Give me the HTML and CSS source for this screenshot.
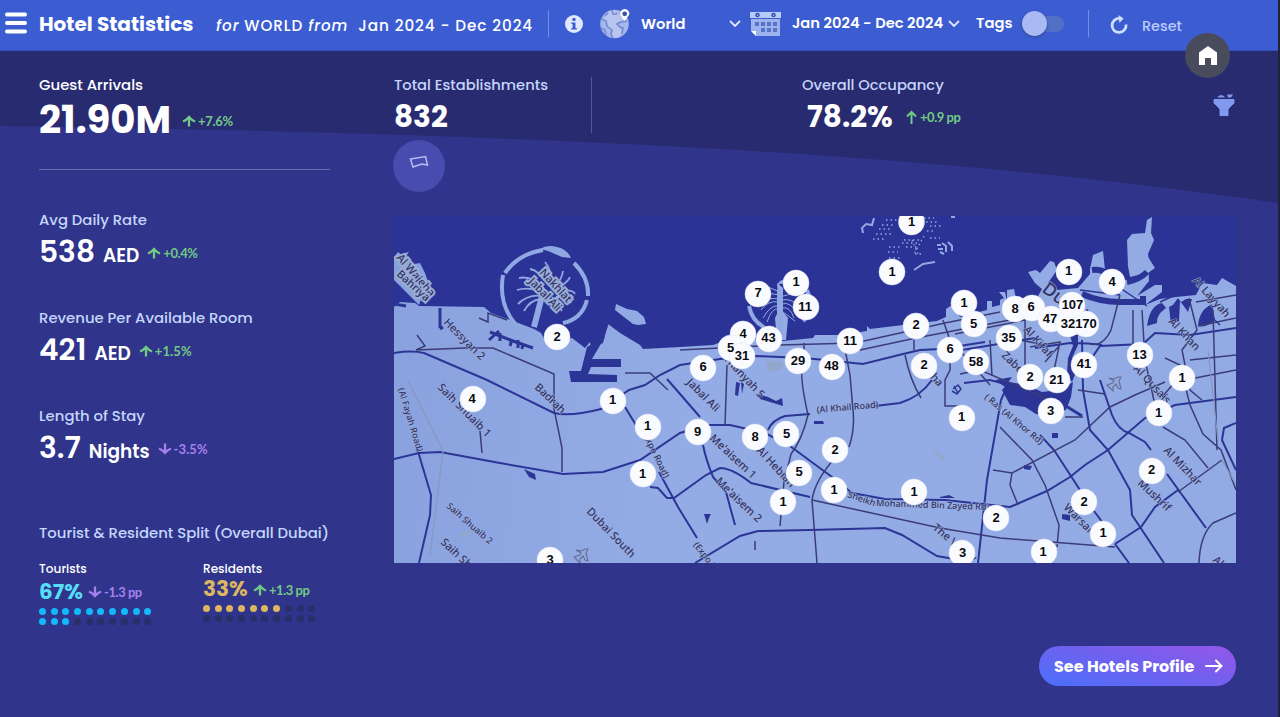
FILE: index.html
```html
<!DOCTYPE html>
<html lang="en">
<head>
<meta charset="utf-8">
<title>Hotel Statistics</title>
<link rel="stylesheet" href="styles.css">
</head>
<body>
<svg class="defs" width="0" height="0" aria-hidden="true">
  <defs>
    <symbol id="arrow" viewBox="0 0 14 12"><path d="M7 11.500V3M1 6.500Q4.500 5 7 2Q9.500 5 13 6.500" fill="none" stroke="currentColor" stroke-width="2.300"/></symbol>
    <symbol id="chevron" viewBox="0 0 12 8"><path d="M1.500 1.500L6 6L10.500 1.500" fill="none" stroke="currentColor" stroke-width="1.800" stroke-linecap="round"/></symbol>
  </defs>
</svg>
<div class="page">
  <header class="bar">
    <svg class="menu" width="22" height="23" viewBox="0 0 22 23"><path d="M2 2.500H20M2 11H20M2 19.500H20" stroke="#fff" stroke-width="4" stroke-linecap="round"/></svg>
    <h1 class="title">Hotel Statistics</h1>
    <div class="context"><i>for</i> <span>WORLD</span> <i>from</i> <span class="range">Jan 2024 - Dec 2024</span></div>
    <span class="rule"></span>
    <svg class="info" width="18" height="18" viewBox="0 0 18 18"><circle cx="9" cy="9" r="9" fill="#dfe8ff"/><circle cx="9" cy="4.500" r="1.700" fill="#3c5dd1"/><path d="M6.300 7.500H10.500V13H11.800V14.500H6.300V13H7.600V9H6.300Z" fill="#3c5dd1"/></svg>
    <svg class="globe" width="30" height="30" viewBox="0 0 30 30"><circle cx="14.500" cy="15" r="14.300" fill="#a6b7ec"/><path d="M9 3L14 1L17 5L22 6L24 12L19 12L15 15L19 18L22 23L19 28L14 29L11 25L13 22L9 20L7 14L3 10Z" fill="#b9c5ee"/><path d="M1.500 10L6 12L7 17L12 21L11 25L13 29M12 1L13 5H17M27 12L21 13L17 15L20 18L23 19L22 25M1 19L5 21L6 26M8 4L5 7" fill="none" stroke="#7389cf" stroke-width="1.500"/><path d="M24.500 12L20.500 6A4.500 4.500 0 1 1 29 6Z" fill="#fff"/><circle cx="24.700" cy="4.800" r="2.400" fill="#3551a8"/></svg>
    <span class="place">World</span>
    <svg class="chev world" width="12" height="8"><use href="#chevron"/></svg>
    <svg class="calendar" width="31" height="26" viewBox="0 0 31 26"><path d="M0 1H31V7H0Z" fill="#b7cafa"/><path d="M1 8H30V25H6L1 20Z" fill="#9db3ef"/><path d="M1 20L6 25V20Z" fill="#fff"/><g fill="#5772c6"><path d="M5 11h4v4H5zM11 11h4v4h-4zM17 11h4v4h-4zM23 11h4v4h-4zM11 17h4v4h-4zM17 17h4v4h-4zM23 17h4v4h-4z"/></g><g fill="none" stroke="#3551b0" stroke-width="1.500"><circle cx="7.500" cy="4" r="1.500"/><circle cx="23.500" cy="4" r="1.500"/></g></svg>
    <span class="period">Jan 2024 - Dec 2024</span>
    <svg class="chev" width="12" height="8"><use href="#chevron"/></svg>
    <span class="tags">Tags</span>
    <span class="toggle"><span class="knob"></span></span>
    <span class="rule second"></span>
    <svg class="reset-icon" width="18" height="19" viewBox="0 0 18 19"><path d="M10 3.500A7 7 0 1 0 16 9.500" fill="none" stroke="#cfe0ff" stroke-width="2.800"/><path d="M8.500 0L13.500 3.500L9.500 8Z" fill="#cfe0ff"/></svg>
    <span class="reset">Reset</span>
  </header>

  <svg class="sweep" width="1278" height="153" viewBox="0 51 1278 153"><path d="M0 51H1278V203C1030 168 720 136 0 126Z" fill="#292b70"/></svg>
  <div class="home"><svg width="18" height="19" viewBox="0 0 18 19"><path d="M9 0L18 6.500V19H12V12H6V19H0V6.500Z" fill="#fff"/></svg></div>
  <svg class="funnel" width="22" height="22" viewBox="0 0 22 22"><path d="M1 5.500H21V9L15 15V21.500H7V15L1 9Z" fill="#8299ed" stroke="#8299ed" stroke-linejoin="round"/><path d="M4 3.500Q8-1.500 12.500 3.500ZM14 .5H20L18 3.500H15Z" fill="#8299ed"/></svg>

  <main class="content">
    <section class="side">
      <div class="metric guests">
        <h2 class="label">Guest Arrivals</h2>
        <div class="line"><span class="value">21.90M</span><svg class="arrow up" width="14" height="12"><use href="#arrow"/></svg><span class="delta up">+7.6%</span></div>
      </div>
      <div class="metric adr">
        <h2 class="label">Avg Daily Rate</h2>
        <div class="line"><span class="value">538</span><span class="unit">AED</span><svg class="arrow up" width="14" height="12"><use href="#arrow"/></svg><span class="delta up">+0.4%</span></div>
      </div>
      <div class="metric revenue">
        <h2 class="label">Revenue Per Available Room</h2>
        <div class="line"><span class="value">421</span><span class="unit">AED</span><svg class="arrow up" width="14" height="12"><use href="#arrow"/></svg><span class="delta up">+1.5%</span></div>
      </div>
      <div class="metric stay">
        <h2 class="label">Length of Stay</h2>
        <div class="line"><span class="value">3.7</span><span class="unit">Nights</span><svg class="arrow down" width="14" height="12"><use href="#arrow"/></svg><span class="delta down">-3.5%</span></div>
      </div>
      <h2 class="label split-title">Tourist &amp; Resident Split (Overall Dubai)</h2>
      <div class="split">
        <div class="share tourists">
          <h3 class="group">Tourists</h3>
          <div class="share-line"><b>67%</b><svg class="arrow down" width="14" height="12"><use href="#arrow"/></svg><span class="delta down">-1.3 pp</span></div>
          <div class="dots"><i class="on"></i><i class="on"></i><i class="on"></i><i class="on"></i><i class="on"></i><i class="on"></i><i class="on"></i><i class="on"></i><i class="on"></i><i class="on"></i><i class="on"></i><i class="on"></i><i class="on"></i><i></i><i></i><i></i><i></i><i></i><i></i><i></i></div>
        </div>
        <div class="share residents">
          <h3 class="group">Residents</h3>
          <div class="share-line"><b>33%</b><svg class="arrow up" width="14" height="12"><use href="#arrow"/></svg><span class="delta up">+1.3 pp</span></div>
          <div class="dots"><i class="on"></i><i class="on"></i><i class="on"></i><i class="on"></i><i class="on"></i><i class="on"></i><i class="on"></i><i></i><i></i><i></i><i></i><i></i><i></i><i></i><i></i><i></i><i></i><i></i><i></i><i></i></div>
        </div>
      </div>
    </section>

    <section class="board">
      <div class="totals">
        <div class="total">
          <h2 class="label">Total Establishments</h2>
          <div class="line"><span class="value">832</span></div>
        </div>
        <span class="divider"></span>
        <div class="total occupancy">
          <h2 class="label">Overall Occupancy</h2>
          <div class="line"><span class="value">78.2%</span><svg class="arrow up tall" width="11" height="15" viewBox="0 0 11 15"><path d="M5.500 14V2M1 6.500L5.500 2L10 6.500" fill="none" stroke="currentColor" stroke-width="2"/></svg><span class="delta up">+0.9 pp</span></div>
        </div>
      </div>
      <div class="lasso"><svg width="20" height="14" viewBox="0 0 20 14"><path d="M1.500 4L16.500 1.500L18.500 10L13 9Q8 10.500 4 12Z" fill="none" stroke="#b8bdf3" stroke-width="1.500"/></svg></div>
      <svg class="map" width="842" height="347" viewBox="394 216 842 347">
        <defs><linearGradient id="land" gradientUnits="userSpaceOnUse" x1="394" x2="1236" y1="300" y2="400"><stop offset="0" stop-color="#89a2df"/><stop offset=".35" stop-color="#94ace5"/><stop offset="1" stop-color="#92abe4"/></linearGradient></defs>
        <rect x="394" y="216" width="842" height="347" fill="#2b3496"/>
        <g fill="url(#land)">
          <path d="M394 307L400 302L415 303L419 306L484 307L491 313L513 321L534 329L541 333L548 346L572 338L585 348L590 342L591 348L603 343L608 324L620 333L640 345L643 349L680 347L713 345L733 338L765 340L783 341L813 338L815 335L840 335L867 331V326L870 329L903 325L937 321L946 317L946 309L952 305L960 317L987 310V301L992 301L992 307L1000 305V300L1004 298L999 292L1005 292L1007 301V290L1014 289L1016 299L1037 298L1042 289L1035 283L1028 272L1036 270L1040 273L1050 261L1054 262L1057 270L1048 283L1057 290L1078 288L1090 274L1090 269L1093 255L1103 251L1105 270L1125 280L1142 277L1155 268L1148 257L1149 281L1137 296L1155 285L1162 285V292L1145 305L1160 299L1176 297L1196 295L1202 283L1217 285L1222 278L1236 286V563H394Z"/>
          <path d="M1127 240L1132 234L1145 233L1147 220L1152 217L1151 233L1154 240L1148 254L1150 272L1130 277L1128 266Z"/>
          <path d="M394 257L398 252L404 257L409 265L420 263L425 273L431 290L426 295L422 296L419 305L394 280Z"/>
          <path d="M615 310L616 304L627 309L637 311L644 317L646 324L638 325L633 324Z"/>
          <path d="M540 249Q547 244 557 247Q567 249 571 258L562 257L548 251Z"/>
          <path d="M777 283L783 288V312L788 318L786 340H777L775 318L779 310Z"/>
          <path d="M780 281Q788 277 793 280L795 284Q783 282 777 285Z"/>
        </g>
        <g fill="none" stroke="#91a9e3">
          <g stroke-width="4"><path d="M543 250Q518 254 505 273M503 275Q498 304 516 325M574 263Q589 278 588 296M587 300Q582 319 563 323M749 306Q752 321 764 327M807 290Q815 310 803 321"/><path d="M542 296L534 327M780 290V338" stroke-width="6"/></g>
          <g stroke-width="1.800"><path d="M545 290Q532 275 519 278M544 293Q529 286 517 290M542 296Q528 294 518 304M541 299Q530 300 524 311M548 284Q538 270 530 269M552 283Q551 269 545 262M555 287Q562 279 563 271M556 290Q569 281 570 277M557 293Q572 288 575 294M556 297Q568 295 571 303M552 297L562 311M549 299L554 310"/></g>
          <g stroke-width="1"><path d="M780 292L768 287M779 295Q771 294 766 292M779 299Q769 297 763 302M779 302Q768 300 761 310M779 306Q771 304 763 318M779 309Q772 307 767 322M780 297Q790 294 795 293M782 300Q790 298 798 305M782 304Q790 301 797 313M782 308Q790 306 794 318M783 312L795 321"/></g>
          <path d="M874 218L872 225L866 224L862 228L863 233M914 270L923 264L935 262M938 249L943 249M940 252L944 254M942 243L946 246V252M948 242L952 246V251M937 245L941 245M951 217H955" stroke-width="2"/>
          <path d="M873 239h13M876 234h16M879 229h12M882 225h11M902 243h16M906 247h13M888 252h10M889 258h12M915 254h6M926 222h13M927 231h8M930 226h12M924 218h10M930 238h10M889 247h12M886 220h12M912 240l6 14M924 236l-10 18M904 240h18" stroke-width="1.300" stroke-dasharray="1.500 3"/>
        </g>
        <g fill="#2c3596">
          <path d="M587 347L605 337L592 359H621V367H591L588 374L617 375V382H571L569 371H581Z"/>
          <path d="M602 343L609 323L587 352Z"/>
          <path d="M1002 390L1009 382L1027 385L1042 392L1060 390L1073 382L1071 397L1066 410L1050 416L1036 414L1025 407L1010 405Z"/>
          <path d="M1070 335H1078V345L1072 358L1078 367L1072 382L1067 375L1068 358L1073 346ZM995 380L1012 377L1005 387Z"/>
          <path d="M1147 326Q1150 305 1162 303L1166 308Q1156 315 1157 323ZM1170 309L1178 298L1188 312L1192 299L1186 299M1169 307L1180 301L1179 321L1171 324ZM1198 326Q1199 310 1212 304L1215 320Q1207 328 1198 326Z"/>
          <path d="M524 469L535 474L536 480L529 477ZM758 394L768 397L776 401L782 398L783 406L770 402L760 399ZM736 382L740 383L738 396L735 395ZM741 382L744 384L742 394ZM814 421L823 421L824 424L814 424ZM704 514L711 514L709 518L707 524ZM1024 465L1032 466L1030 470L1024 469ZM1062 514L1070 515L1070 521L1062 519ZM1052 433H1058V438H1052ZM940 497L949 495L955 498H940Z"/>
        </g>
        <g fill="none" stroke="#2c3596">
          <g stroke-width="6"><path d="M1082 294Q1100 302 1120 302H1143L1143 296M1092 270Q1100 269 1104 272M1127 282Q1139 280 1147 272"/></g>
          <g stroke-width="3"><path d="M490 332L513 341L533 348M499 331L489 340M440 308V328M440 329L443 327M394 304L406 306M500 333V341M518 340V348M512 339L510 346M523 343L522 349M1066 406L1082 416"/></g>
          <g stroke-width="2"><path d="M394 353Q412 350 424 353L487 380L554 413Q570 417 601 409L629 390L645 385L660 375L680 365L720 359L755 356L805 358L863 364L903 354L920 350L941 349L985 342"/>
            <path d="M394 459L419 453L440 452L500 463L563 474L603 472L640 460L680 433L709 425H730L765 433L790 446L832 477L852 493L885 499L945 500L1010 507L1047 491L1070 477L1085 465L1108 450L1145 418L1175 405L1236 397"/>
            <path d="M417 448L431 495L430 515L419 563M667 379L700 417M625 407L645 440M659 472L678 507L697 538M650 487L658 488L667 498H674L706 475L720 468Q732 468 751 483L810 497M703 445Q706 460 713 477L726 492L735 525M695 563L740 536L758 531L810 530L885 528L902 535L937 556L960 560M768 430Q772 420 785 416L810 414M875 406L900 403Q920 397 932 380M978 563L987 480L1001 400L1009 382M1082 340L1083 390L1090 430L1108 450L1130 490L1132 515L1140 527L1164 563M1100 380L1112 415Q1118 430 1129 433L1145 442L1151 450M1167 474L1206 528M1040 435L1054 450L1080 490M1094 511L1106 527M1115 544L1129 563M1115 544L1141 527L1155 507L1178 490M1236 423L1224 428L1222 440L1236 470M964 383L990 380L1020 388"/>
            <path d="M1102 345Q1089 343 1070 343L1035 348M950 352L1035 338M1080 375L1100 346L1143 344L1155 333L1190 335L1236 328"/></g>
          <g stroke-width="1.500" stroke="#3b3c79"><path d="M417 335L425 346L416 350L465 348L493 348L554 374V409L562 448V472M625 373H650L668 390M479 318L488 322V313L507 320M480 431L482 453M727 365L725 425M804 343V365Q798 370 808 415Q802 440 791 454L784 482L780 526M845 349L850 375L853 410Q855 430 849 447M835 458Q815 480 812 500L817 563M812 500L940 528L1000 538L1115 547M755 541V550M680 350L780 345L855 343L945 323L1000 312M860 350L916 338L1010 320M914 340V350M905 355Q910 380 921 398M943 320L950 340V370L945 380V406H960M1120 295L1111 330Q1103 347 1090 344M1133 310V345M1142 310L1145 360L1155 405M1165 358L1180 365L1190 405L1203 434L1221 450L1236 490M1189 298L1197 330L1182 350L1190 390L1202 400M1213 310L1217 450M1196 302L1236 295M1198 326L1236 318M1190 360L1236 355M1162 397L1175 382L1236 370M1163 427L1185 440L1208 468M1178 492L1222 460M1236 513L1213 523Q1200 535 1199 563M993 470L1012 473L1075 440L1110 407L1135 395L1165 382M1012 473L1010 485L1018 505M1000 427L1032 460L1045 485L1059 525L1057 547M1030 347L1060 342L1052 380M1025 320V370M1020 340L1045 345M955 334L1025 320M960 374L980 370L1050 400M1078 390L1105 394M1065 417L1083 417M1060 345L1045 362M990 340L992 376M955 345L990 385"/></g>
          <path d="M408 381L443 451L430 555M1208 350L1218 440M1222 460L1236 485" stroke="#8797bd" stroke-width="1.200"/>
          <path d="M953 389L958 385L961 389L957 394L952 391M954 386L958 393M1120 288L1147 306M1120 295L1080 290M1204 310L1220 325M1180 293L1160 302" stroke-width="1.500"/>
        </g>
        <g fill="#91a7cc"><path d="M767 360L783 363L782 370L768 372ZM932 448L946 458L942 462ZM460 532Q468 528 472 534Q466 539 460 535Z"/></g>
        <g fill="none" stroke="#676c91" stroke-width="1.100"><path id="jet" d="M576 550L581 551L585 549L588 549L586 553L588 561L585 560L583 556L580 559V563L577 560L574 557L580 555L581 553Z"/><use href="#jet" x="533" y="-172"/></g>
        <g class="streets">
          <g class="boxed"><text transform="translate(396 258) rotate(49)">Al Wajeha</text><text transform="translate(396 275) rotate(42)">Bahriya</text><text transform="translate(539 273) rotate(47)">Nakhlat</text><text transform="translate(528 282) rotate(46)">Jabal Ali</text></g>
          <text transform="translate(443 323) rotate(45)">Hessyan 2</text><text transform="translate(534 388) rotate(44)">Badrah</text><text transform="translate(437 388) rotate(45)">Saih Shuaib 1</text><text class="small" transform="translate(398 389) rotate(73)">(Al Fayah Road)</text><text transform="translate(440 543) rotate(43)">Saih Shuaib</text><text transform="translate(446 507) rotate(41)" class="small">Saih Shuaib 2</text><text transform="translate(586 512) rotate(46)">Dubai South</text><text class="small" transform="translate(642 433) rotate(64)">(Expo Road)</text><text transform="translate(686 383) rotate(45)">Jabal Ali</text><text transform="translate(723 359) rotate(47)">Thanyah 5</text><text transform="translate(709 439) rotate(43)">Me'aisem 1</text><text transform="translate(715 482) rotate(44)">Me'aisem 2</text><text transform="translate(756 451) rotate(47)">Al Hebiah</text><text class="small" transform="translate(693 545) rotate(52)">(Expo Road)</text><text class="small" transform="translate(817 413) rotate(-5)">(Al Khail Road)</text><text class="small" transform="translate(847 497) rotate(19)">Sheikh</text><text class="small" transform="translate(876 506) rotate(2)">Mohammed Bin Zayed Rd)</text><text transform="translate(932 529) rotate(39)">The Valley</text><text class="city" transform="translate(1041 291) rotate(37)">Dubai</text><text transform="translate(1023 330) rotate(48)">Al Kifaf</text><text transform="translate(1001 356) rotate(44)">Zabeel</text><text transform="translate(914 360) rotate(48)">Barsha</text><text class="small" transform="translate(984 398) rotate(40)">( Ras (Al Khor Rd)</text><text transform="translate(1133 369) rotate(47)">Al Qusais</text><text transform="translate(1168 322) rotate(47)">Al Khan</text><text transform="translate(1192 281) rotate(48)">Al Layyah</text><text transform="translate(1163 451) rotate(46)">Al Mizhar</text><text transform="translate(1137 484) rotate(43)">Mushrif</text><text transform="translate(1063 508) rotate(45)">Warsan</text><text transform="translate(1212 561) rotate(40)">Al</text>
        </g>
        <g class="pins"><circle cx="911.500" cy="222" r="13"/><circle cx="892" cy="272" r="13"/><circle cx="758" cy="294" r="13"/><circle cx="796" cy="283" r="13"/><circle cx="806" cy="307" r="13"/><circle cx="743" cy="334" r="13"/><circle cx="731" cy="348" r="13"/><circle cx="742" cy="356" r="13"/><circle cx="769" cy="339" r="13"/><circle cx="798" cy="361" r="13"/><circle cx="832" cy="367" r="13"/><circle cx="850" cy="341" r="13"/><circle cx="916" cy="326" r="13"/><circle cx="964" cy="303" r="13"/><circle cx="974" cy="324" r="13"/><circle cx="950" cy="350" r="13"/><circle cx="976" cy="362" r="13"/><circle cx="924" cy="366" r="13"/><circle cx="1015" cy="309" r="13"/><circle cx="1032" cy="308" r="13"/><circle cx="1051" cy="319" r="13"/><circle cx="1068" cy="324" r="13"/><circle cx="1086" cy="324" r="13"/><circle cx="1072" cy="305" r="13"/><circle cx="1009" cy="338" r="13"/><circle cx="1069" cy="272" r="13"/><circle cx="1112" cy="282" r="13"/><circle cx="1084" cy="365" r="13"/><circle cx="1030" cy="377" r="13"/><circle cx="1057" cy="380" r="13"/><circle cx="1051" cy="411" r="13"/><circle cx="1140" cy="355" r="13"/><circle cx="1182" cy="378" r="13"/><circle cx="1159" cy="413" r="13"/><circle cx="1152" cy="471" r="13"/><circle cx="1084" cy="502" r="13"/><circle cx="1103" cy="534" r="13"/><circle cx="1044" cy="552" r="13"/><circle cx="996" cy="518" r="13"/><circle cx="962" cy="553" r="13"/><circle cx="962" cy="418" r="13"/><circle cx="914" cy="492" r="13"/><circle cx="834" cy="490" r="13"/><circle cx="835" cy="450" r="13"/><circle cx="786" cy="434" r="13"/><circle cx="755" cy="437" r="13"/><circle cx="799" cy="473" r="13"/><circle cx="783" cy="502" r="13"/><circle cx="698" cy="432" r="13"/><circle cx="703" cy="368" r="13"/><circle cx="648" cy="427" r="13"/><circle cx="613" cy="401" r="13"/><circle cx="643" cy="474" r="13"/><circle cx="557" cy="337" r="13"/><circle cx="473" cy="399" r="13"/><circle cx="550" cy="560" r="13"/></g>
        <g class="counts"><text x="911.500" y="226">1</text><text x="892" y="276">1</text><text x="758" y="297">7</text><text x="796" y="286">1</text><text x="805" y="311">11</text><text x="743" y="338">4</text><text x="730.500" y="352">5</text><text x="742" y="360">31</text><text x="768.500" y="342">43</text><text x="798" y="365">29</text><text x="831.500" y="370">48</text><text x="850" y="345">11</text><text x="916" y="329">2</text><text x="964" y="307">1</text><text x="973.500" y="328">5</text><text x="950" y="353">6</text><text x="976" y="366">58</text><text x="924" y="369">2</text><text x="1015" y="313">8</text><text x="1031" y="311">6</text><text x="1050" y="323">47</text><text x="1072.500" y="309">107</text><text x="1068" y="328">32</text><text x="1086" y="328">170</text><text x="1008.500" y="342">35</text><text x="1068.500" y="275">1</text><text x="1112" y="286">4</text><text x="1084" y="368">41</text><text x="1030" y="381">2</text><text x="1056.500" y="384">21</text><text x="1050.500" y="415">3</text><text x="1139.500" y="359">13</text><text x="1182" y="382">1</text><text x="1158.500" y="417">1</text><text x="1151.500" y="474">2</text><text x="1084" y="506">2</text><text x="1103" y="537">1</text><text x="1043" y="556">1</text><text x="996" y="522">2</text><text x="962.500" y="557">3</text><text x="961.500" y="421">1</text><text x="914" y="496">1</text><text x="834" y="494">1</text><text x="835" y="454">2</text><text x="786.500" y="438">5</text><text x="755" y="441">8</text><text x="799" y="476">5</text><text x="783" y="506">1</text><text x="697.500" y="436">9</text><text x="703" y="371">6</text><text x="647.500" y="430">1</text><text x="612.500" y="404">1</text><text x="642.500" y="478">1</text><text x="557" y="341">2</text><text x="472" y="403">4</text><text x="550" y="564">3</text></g>
      </svg>
      <div class="actions"><a class="cta"><span>See Hotels Profile</span><svg width="18" height="14" viewBox="0 0 18 14"><path d="M1 7H16M11 1.500L16.500 7L11 12.500" fill="none" stroke="#fff" stroke-width="2" stroke-linecap="round"/></svg></a></div>
    </section>
  </main>
</div>
</body>
</html>
```
FILE: styles.css
```css
* { box-sizing: border-box; }
body { margin: 0; background: #20213b; font-family: Poppins, Inter, sans-serif; color: #fff; }
h1, h2, h3 { margin: 0; }
svg { display: block; flex: none; }
.defs { position: absolute; }
.page { position: relative; width: 1278px; height: 717px; overflow: hidden; background: #30348a; }

.bar { display: flex; align-items: center; height: 51px; padding: 0 0 3px 5px; background: #3c5dd1; border-bottom: 1px solid #374fb6; white-space: nowrap; }
.menu { margin-right: 12px; }
.title { width: 177px; font-size: 20px; font-weight: 700; padding-top: 1px; }
.context { width: 332px; font-size: 15.200px; font-weight: 500; letter-spacing: .95px; padding-top: 3px; }
.range { margin-left: 5px; }
.rule { width: 1px; height: 27px; background: #758de2; }
.info { margin-left: 16px; }
.globe { margin-left: 17px; }
.place { width: 88px; margin-left: 11px; padding-top: 1px; font-size: 14.700px; font-weight: 600; }
.chev { color: #dfe8ff; }
.calendar { margin-left: 9px; }
.period { width: 152px; margin: 0 4px 0 11px; font-size: 14.700px; font-weight: 600; }
.tags { width: 37px; margin: 0 9px 0 16px; font-size: 14.700px; font-weight: 600; }
.toggle { width: 42px; height: 16px; display: flex; align-items: center; border-radius: 8px; background: #5271c6; }
.knob { width: 25px; height: 25px; flex: none; border-radius: 50%; background: #a9b9f2; box-shadow: 0 1px 3px #2c4494; }
.second { margin-left: 24px; }
.reset-icon { margin-left: 21px; margin-top: 2px; }
.reset { margin: 5px 0 0 14px; color: #b9ccfb; font-size: 14.400px; font-weight: 500; }

.sweep { position: absolute; left: 0; top: 51px; }
.home { position: absolute; left: 1185px; top: 33px; width: 45px; height: 45px; border-radius: 50%; background: #484b5c; display: flex; align-items: center; justify-content: center; z-index: 2; }
.funnel { position: absolute; left: 1213px; top: 94px; }

.content { position: relative; display: grid; grid-template-columns: 291px 842px; column-gap: 64px; padding: 23px 42px 0 39px; }
.label { height: 22px; font-size: 14.700px; line-height: 22px; font-weight: 500; color: #c5d6fc; white-space: nowrap; }
.side .label { font-size: 14.850px; }
.line { display: flex; align-items: center; white-space: nowrap; }
.value { font-weight: 700; }
.delta { font-family: Lato, sans-serif; font-size: 13px; font-weight: 700; letter-spacing: -.45px; }
.up { color: #70ca85; }
.down { color: #a581ee; }
.arrow.down { transform: rotate(180deg); }
.metric { height: 98px; }
.metric .line { height: 42px; }
.metric .value { font-size: 29.700px; font-weight: 600; }
.metric .unit { margin: 7px 8px 0 8px; font-size: 18.500px; font-weight: 600; }
.metric .arrow { margin-top: 2px; }
.metric .delta { margin: 2px 0 0 2px; }
.revenue .delta, .stay .delta { letter-spacing: .1px; }
.guests { height: 96px; margin-bottom: 39px; border-bottom: 1px solid #686ba9; }
.side .guests .label { color: #fff; font-size: 14.900px; }
.guests .line { height: 48px; }
.guests .value { width: 143px; margin-top: -1px; font-size: 38.700px; font-weight: 700; }
.guests .delta { margin-top: 2px; letter-spacing: -.3px; }
.split-title { margin-top: 19px; }
.split { display: flex; gap: 51px; padding-top: 16px; }
.share { width: 113px; }
.group { height: 18px; font-size: 12.100px; line-height: 18px; font-weight: 500; }
.share-line { display: flex; align-items: center; height: 28px; margin-bottom: 2px; white-space: nowrap; }
.share-line b { width: 49px; font-size: 21.500px; margin-top: -2px; }
.share-line .delta { margin-left: 2px; }
.tourists b { color: #55ddf9; }
.residents b { color: #dcb660; }
.residents .share-line { height: 23px; margin-bottom: 4px; }
.residents .arrow { margin-left: 1px; }
.dots { display: grid; grid-template-columns: repeat(10, 7px); column-gap: 4.700px; row-gap: 3px; }
.dots i { width: 7px; height: 7px; border-radius: 50%; background: #2a2e69; }
.tourists .on { background: #12b9fa; }
.residents .on { background: #dcb660; }

.totals { display: flex; height: 66px; }
.total { width: 197px; }
.total .line { height: 42px; }
.total .value { font-size: 29.500px; }
.divider { width: 1px; height: 56px; margin-top: 3px; background: #565992; }
.occupancy { margin-left: 210px; }
.occupancy .value { width: 99px; margin-left: 5px; }
.occupancy .delta { margin-left: 3px; }
.lasso { width: 52px; height: 52px; margin: 0 0 24px -1px; border-radius: 50%; background: #484caf; display: flex; justify-content: center; padding-top: 15px; }
.streets text { font: 500 11px "Noto Sans", sans-serif; fill: #343366; paint-order: stroke; stroke: #9aafdd; stroke-width: 1px; }
.streets .small { font-size: 9px; }
.streets .boxed text { stroke: #98add5; stroke-width: 4px; }
.streets .city { font-size: 18px; }
.pins circle { fill: #fafbff; stroke: #e2e7f7; stroke-width: .5px; }
.counts text { font: bold 13px "Liberation Sans", sans-serif; text-anchor: middle; fill: #090a10; }
.actions { display: flex; justify-content: flex-end; padding-top: 83px; }
.cta { display: flex; align-items: center; justify-content: space-between; width: 197px; height: 40px; padding: 0 13px 0 15px; border-radius: 20px; background: linear-gradient(15deg, #4b70fb 0%, #7160ee 55%, #9657e9 100%); font-size: 16px; font-weight: 700; white-space: nowrap; }
```
